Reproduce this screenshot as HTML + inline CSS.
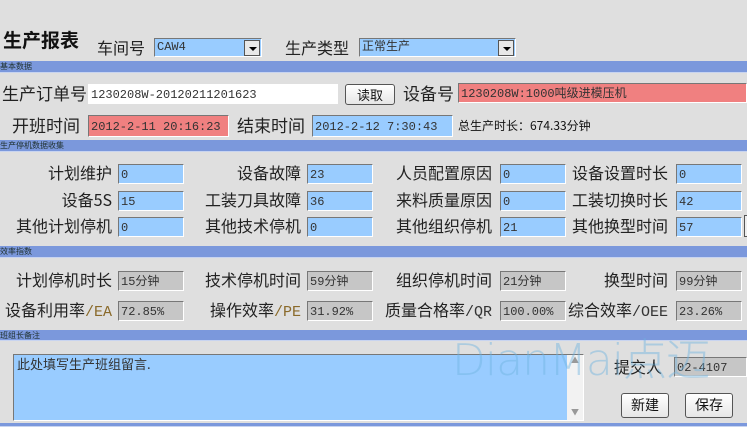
<!DOCTYPE html>
<html><head><meta charset="utf-8">
<style>
*{margin:0;padding:0;box-sizing:border-box}
body{width:747px;height:427px;background:#dfdfdf;position:relative;overflow:hidden;font-family:"Liberation Sans","SimSun","Noto Sans CJK SC",sans-serif;color:#111}
.a{position:absolute;white-space:nowrap}
.bar{position:absolute;left:0;width:747px;background:#7b98dc;color:#233;font-size:8px;line-height:11px;padding-left:0;border-bottom:1px solid #c8d4f0}
.lb{position:absolute;font-size:16px;line-height:20px;text-align:right;white-space:nowrap;font-family:"Noto Sans CJK SC","WenQuanYi Zen Hei",sans-serif;color:#222}
.in{position:absolute;height:20px;font-size:12px;line-height:20px;padding-left:2px;border:1px solid #fff;border-top-color:#777;border-left-color:#777;font-family:"Liberation Mono","Noto Sans CJK SC",monospace;white-space:nowrap;overflow:hidden;color:#333}
.bl{background:#99ccff}
.gr{background:#c6c6c6}
.rd{background:#f08080}
.wh{background:#fff}
.btn{position:absolute;border:1px solid #555;border-radius:3px;background:linear-gradient(#fff,#e6e6e6);font-size:14px;text-align:center;font-family:"Noto Sans CJK SC",sans-serif;line-height:22px}
.dd{position:absolute;width:16px;height:16px;background:#e8e8e8;border:1px solid #555;top:1px}
.dd:after{content:"";position:absolute;left:4px;top:6px;border:4px solid transparent;border-top:4px solid #000}
</style></head><body>
<div class="a" style="left:3px;top:26px;font-size:19px;font-weight:bold;font-family:'Noto Sans CJK SC',sans-serif">生产报表</div>
<div class="lb" style="left:97px;top:37px">车间号</div>
<div class="in bl" style="left:154px;top:38px;width:108px;height:19px;line-height:17px">CAW4<div class="dd" style="right:1px"></div></div>
<div class="lb" style="left:285px;top:37px">生产类型</div>
<div class="in bl" style="left:359px;top:38px;width:157px;height:19px;line-height:17px">正常生产<div class="dd" style="right:1px"></div></div>

<div class="bar" style="top:61px;height:12px">基本数据</div>
<div class="lb" style="left:2px;top:83px;font-size:17px">生产订单号</div>
<div class="in wh" style="left:88px;top:84px;width:250px;border-color:#fff">1230208W-20120211201623</div>
<div class="btn" style="left:345px;top:84px;width:50px;height:21px;line-height:19px;font-size:13px">读取</div>
<div class="lb" style="left:403px;top:83px;font-size:17px">设备号</div>
<div class="in rd" style="left:458px;top:83px;width:289px">1230208W:1000吨级进模压机</div>
<div class="lb" style="left:12px;top:115px;font-size:17px">开班时间</div>
<div class="in rd" style="left:88px;top:115px;width:141px;height:22px;line-height:22px">2012-2-11 20:16:23</div>
<div class="lb" style="left:237px;top:115px;font-size:17px">结束时间</div>
<div class="in bl" style="left:312px;top:115px;width:141px;height:22px;line-height:22px">2012-2-12 7:30:43</div>
<div class="a" style="left:458px;top:117px;font-size:12px;font-family:'Noto Sans CJK SC',sans-serif">总生产时长：674.33分钟</div>

<div class="bar" style="top:140px;height:12px">生产停机数据收集</div>
<div class="lb" style="right:635px;top:162px">计划维护</div><div class="in bl" style="left:118px;top:164px;width:66px">0</div>
<div class="lb" style="right:446px;top:162px">设备故障</div><div class="in bl" style="left:307px;top:164px;width:66px">23</div>
<div class="lb" style="right:255px;top:162px">人员配置原因</div><div class="in bl" style="left:500px;top:164px;width:66px">0</div>
<div class="lb" style="right:79px;top:162px">设备设置时长</div><div class="in bl" style="left:676px;top:164px;width:66px">0</div>

<div class="lb" style="right:635px;top:189px">设备5S</div><div class="in bl" style="left:118px;top:191px;width:66px">15</div>
<div class="lb" style="right:446px;top:189px">工装刀具故障</div><div class="in bl" style="left:307px;top:191px;width:66px">36</div>
<div class="lb" style="right:255px;top:189px">来料质量原因</div><div class="in bl" style="left:500px;top:191px;width:66px">0</div>
<div class="lb" style="right:79px;top:189px">工装切换时长</div><div class="in bl" style="left:676px;top:191px;width:66px">42</div>

<div class="lb" style="right:635px;top:215px">其他计划停机</div><div class="in bl" style="left:118px;top:217px;width:66px">0</div>
<div class="lb" style="right:446px;top:215px">其他技术停机</div><div class="in bl" style="left:307px;top:217px;width:66px">0</div>
<div class="lb" style="right:255px;top:215px">其他组织停机</div><div class="in bl" style="left:500px;top:217px;width:66px">21</div>
<div class="lb" style="right:79px;top:215px">其他换型时间</div><div class="in bl" style="left:676px;top:217px;width:66px">57</div>
<div class="a" style="left:744px;top:215px;width:4px;height:22px;border:1px solid #555;background:#eee"></div>

<div class="bar" style="top:246px;height:12px">效率指数</div>
<div class="lb" style="right:635px;top:269px">计划停机时长</div><div class="in gr" style="left:118px;top:271px;width:66px">15分钟</div>
<div class="lb" style="right:446px;top:269px">技术停机时间</div><div class="in gr" style="left:307px;top:271px;width:66px">59分钟</div>
<div class="lb" style="right:255px;top:269px">组织停机时间</div><div class="in gr" style="left:500px;top:271px;width:66px">21分钟</div>
<div class="lb" style="right:79px;top:269px">换型时间</div><div class="in gr" style="left:676px;top:271px;width:66px">99分钟</div>

<div class="lb" style="right:635px;top:299px">设备利用率<span style="color:#8a6a2a;font-family:'Liberation Mono',monospace;font-size:15px">/EA</span></div><div class="in gr" style="left:118px;top:301px;width:66px">72.85%</div>
<div class="lb" style="right:446px;top:299px">操作效率<span style="color:#8a6a2a;font-family:'Liberation Mono',monospace;font-size:15px">/PE</span></div><div class="in gr" style="left:307px;top:301px;width:66px">31.92%</div>
<div class="lb" style="right:255px;top:299px">质量合格率<span style="color:#333;font-family:'Liberation Mono',monospace;font-size:15px">/QR</span></div><div class="in gr" style="left:500px;top:301px;width:66px">100.00%</div>
<div class="lb" style="right:79px;top:299px">综合效率<span style="color:#333;font-family:'Liberation Mono',monospace;font-size:15px">/OEE</span></div><div class="in gr" style="left:676px;top:301px;width:66px">23.26%</div>

<div class="bar" style="top:330px;height:11px">班组长备注</div>
<div class="in bl" style="left:13px;top:354px;width:571px;height:67px;font-family:'Noto Sans CJK SC',sans-serif;font-size:13px;line-height:18px;padding-left:3px">此处填写生产班组留言.
<div style="position:absolute;right:0;top:0;width:16px;height:66px;background:#f2f2f2;color:#999;font-size:8px;text-align:center;line-height:12px">▲<div style="position:absolute;bottom:2px;width:16px">▼</div></div></div>
<div class="lb" style="left:614px;top:356px">提交人</div>
<div class="in gr" style="left:674px;top:357px;width:73px">02-4107</div>
<div class="btn" style="left:621px;top:393px;width:48px;height:25px">新建</div>
<div class="btn" style="left:685px;top:393px;width:48px;height:25px">保存</div>
<div class="bar" style="top:423px;height:4px"></div>
<div class="a" style="left:452px;top:324px;font-size:44px;letter-spacing:-1px;color:rgba(110,180,225,0.45);font-family:'DejaVu Sans','Noto Sans CJK SC',sans-serif;font-weight:200">DianMai点迈</div>
</body></html>
